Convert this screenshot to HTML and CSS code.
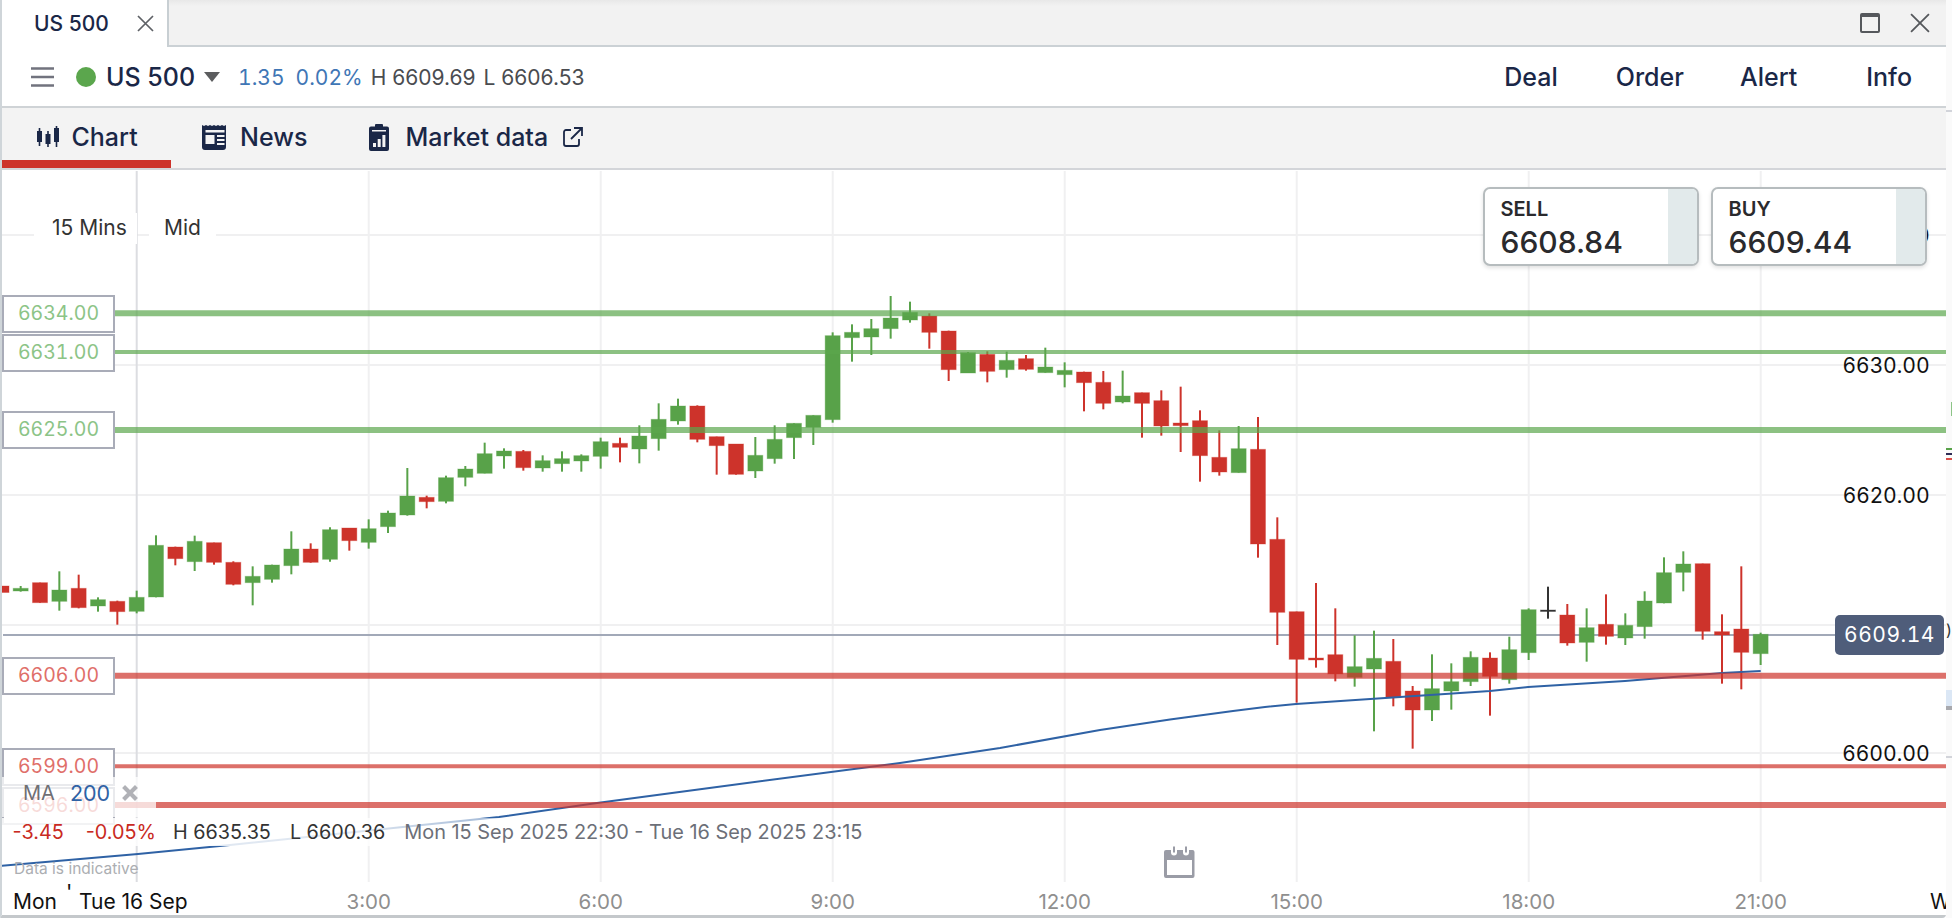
FILE: index.html
```html
<!DOCTYPE html>
<html lang="en">
<head>
<meta charset="utf-8">
<title>US 500</title>
<link rel="stylesheet" href="styles.css">
</head>
<body>
<div class="window">
  <header class="titlebar">
    <div class="tab">
      <span class="tab-name">US 500</span>
      <svg class="icon-x" viewBox="0 0 17 17"><path d="M1 1l15 15M16 1L1 16"/></svg>
    </div>
    <div class="win-controls">
      <svg class="icon-max" viewBox="0 0 20 20"><rect x="1" y="1" width="18" height="18" rx="1"/><path class="bar" d="M1 2.500h18"/></svg>
      <svg class="icon-close" viewBox="0 0 19 19"><path d="M1 1l17 17M18 1L1 18"/></svg>
    </div>
  </header>

  <div class="quotebar">
    <svg class="icon-menu" viewBox="0 0 23 20"><path d="M0 1.500h23M0 10h23M0 18.500h23"/></svg>
    <span class="dot"></span>
    <span class="instrument">US 500</span>
    <svg class="caret" viewBox="0 0 16 10"><path d="M0 0h16L8 10z"/></svg>
    <span class="chg chg-abs">1.35</span>
    <span class="chg chg-pct">0.02%</span>
    <span class="hl hl-h">H 6609.69</span>
    <span class="hl hl-l">L 6606.53</span>
    <nav class="actions">
      <a class="action action-deal">Deal</a>
      <a class="action action-order">Order</a>
      <a class="action action-alert">Alert</a>
      <a class="action action-info">Info</a>
    </nav>
  </div>

  <div class="tabsbar">
    <div class="nav-tab nav-chart is-active">
      <svg class="nav-icon icon-chart" viewBox="0 0 22 22"><path d="M0 5h5v11H0zM1.700 2h1.600v18H1.700zM8.500 8h5v10h-5zM10.200 5h1.600v16h-1.600zM17 2h5v14h-5zM18.700 0h1.600v21h-1.600z"/></svg>
      <span>Chart</span>
    </div>
    <div class="nav-tab nav-news">
      <svg class="nav-icon icon-news" viewBox="0 0 26 26"><path class="solid" d="M0 1l2 1 2-1 2 1 2-1 2 1 2-1 2 1 2-1 2 1 2-1 2 1 2-1v22a3 3 0 0 1-3 3H3a3 3 0 0 1-3-3z"/><path class="cut" d="M3.500 6h19v2.500h-19zM3.500 11h9v9h-9zM15 11h7.500v2H15zM15 15h7.500v2H15zM15 19h7.500v2H15z"/></svg>
      <span>News</span>
    </div>
    <div class="nav-tab nav-market">
      <svg class="nav-icon icon-market" viewBox="0 0 20 27"><path class="solid" d="M6 2.500V1a1 1 0 0 1 1-1h6a1 1 0 0 1 1 1v1.500h4a2 2 0 0 1 2 2V25a2 2 0 0 1-2 2H2a2 2 0 0 1-2-2V4.500a2 2 0 0 1 2-2z"/><path class="cut" d="M3 6h14v1.500H3zM4 19h3v4H4zM8.700 15h3v8h-3zM13.400 11h3v12h-3z"/></svg>
      <span>Market data</span>
      <svg class="icon-ext" viewBox="0 0 20 20"><path d="M8 3H3a2 2 0 0 0-2 2v12a2 2 0 0 0 2 2h11a2 2 0 0 0 2-2v-5M11 1h8v8M19 1L8 12"/></svg>
    </div>
  </div>

  <main class="chart">
    <svg class="plot" id="plot" viewBox="2 170 1944 745" width="1944" height="745">
      <g class="grid">
        <path d="M2 235H1946M2 365H1946M2 495H1946M2 625H1946M2 753H1946"/>
        <path d="M368.700 171V882M600.700 171V882M832.700 171V882M1064.700 171V882M1296.700 171V882M1528.700 171V882M1760.700 171V882"/>
      </g>
      <path class="grid-day" d="M136.700 171V882"/>
      <path class="last-price" d="M3 635H1840"/>
      <g class="y-axis">
        <text x="1930" y="243">6640.00</text>
        <text x="1930" y="373">6630.00</text>
        <text x="1930" y="503">6620.00</text>
        <text x="1930" y="761">6600.00</text>
      </g>
      <g id="candles"></g>
      <path class="ma" d="M0 866L138 854L230 845L499 817L597 803L717 787L900 763L1000 748L1100 730L1170 719.500L1233 711L1265 707L1296 704L1400 697L1490 691L1528 687L1625 681L1722 673L1760.700 671"/>
      <g class="levels-up">
        <path class="lv-thick" d="M114 313.300H1946M114 430H1946"/>
        <path class="lv-thin" d="M114 352H1946"/>
        <rect class="tag" x="3" y="296" width="111" height="36"/>
        <rect class="tag" x="3" y="335" width="111" height="36"/>
        <rect class="tag" x="3" y="412" width="111" height="36"/>
        <text class="tag-up" x="58.500" y="320">6634.00</text>
        <text class="tag-up" x="58.500" y="359">6631.00</text>
        <text class="tag-up" x="58.500" y="436">6625.00</text>
      </g>
      <g class="levels-down">
        <path class="lv-thick" d="M114 675.700H1946M114 805H1946"/>
        <path class="lv-thin" d="M114 766.300H1946"/>
        <rect class="tag" x="3" y="658" width="111" height="36"/>
        <rect class="tag" x="3" y="749" width="111" height="36"/>
        <rect class="tag" x="3" y="788" width="111" height="36"/>
        <text class="tag-down" x="58.500" y="682">6606.00</text>
        <text class="tag-down" x="58.500" y="773">6599.00</text>
        <text class="tag-down" x="58.500" y="812">6596.00</text>
      </g>
      <g class="x-axis">
        <text x="368.700" y="909">3:00</text>
        <text x="600.700" y="909">6:00</text>
        <text x="832.700" y="909">9:00</text>
        <text x="1064.700" y="909">12:00</text>
        <text x="1296.700" y="909">15:00</text>
        <text x="1528.700" y="909">18:00</text>
        <text x="1760.700" y="909">21:00</text>
      </g>
      <g class="x-major">
        <text x="13" y="909">Mon</text>
        <text x="66" y="900" class="tick-mark">'</text>
        <text x="79" y="909">Tue 16 Sep</text>
        <text x="1930" y="909">W</text>
      </g>
      <g class="calendar">
        <path d="M1166 850h5v2.500a3 3 0 0 0 6 0V850h6v2.500a3 3 0 0 0 6 0V850h3.500a2 2 0 0 1 2 2v24a2 2 0 0 1-2 2H1166a2 2 0 0 1-2-2v-24a2 2 0 0 1 2-2z"/>
        <path d="M1173 846.500h2v6h-2zM1185 846.500h2v6h-2z"/>
        <rect class="cal-page" x="1167" y="860" width="25" height="15"/>
      </g>
    </svg>

    <div class="period">
      <span class="period-item period-res">15 Mins</span>
      <span class="period-item period-mid">Mid</span>
    </div>

    <div class="deals">
      <div class="deal"><div class="deal-body"><span class="deal-side">SELL</span><span class="deal-price">6608.84</span></div><div class="deal-strip"></div></div>
      <div class="deal"><div class="deal-body"><span class="deal-side">BUY</span><span class="deal-price">6609.44</span></div><div class="deal-strip"></div></div>
    </div>

    <div class="last-tag">6609.14</div>

    <div class="ma-legend">
      <span class="ma-name">MA</span>
      <span class="ma-val">200</span>
      <svg class="ma-x" viewBox="0 0 14 14"><path d="M2 2l10 10M12 2L2 12"/></svg>
    </div>

    <div class="ohlc">
      <span class="o-down o-abs">-3.45</span>
      <span class="o-down o-pct">-0.05%</span>
      <span class="o-val o-h">H 6635.35</span>
      <span class="o-val o-l">L 6600.36</span>
      <span class="o-range">Mon 15 Sep 2025 22:30 - Tue 16 Sep 2025 23:15</span>
    </div>

    <div class="disclaimer">Data is indicative</div>
  </main>
</div>

<aside class="behind">
  <span class="b-line b-1"></span>
  <span class="b-green"></span>
  <span class="b-stack"></span>
  <span class="b-glyph">)</span>
  <span class="b-blue"></span>
  <span class="b-line b-2"></span>
</aside>
<script src="chart.js"></script>
</body>
</html>
```
FILE: styles.css
```css
* { box-sizing: border-box; }
html, body { margin: 0; height: 100%; }
body {
  width: 1952px;
  height: 918px;
  display: flex;
  overflow: hidden;
  background: #fff;
  font-family: Inter, "Liberation Sans", sans-serif;
  color: #1a2747;
}
.window {
  width: 1946px;
  height: 918px;
  display: flex;
  flex-direction: column;
  border-left: 2px solid #cfd5d9;
  border-bottom: 3px solid #c4c8cb;
  border-bottom-right-radius: 4px;
}

/* Title bar */
.titlebar {
  height: 47px;
  flex: none;
  display: flex;
  justify-content: space-between;
  background: linear-gradient(#e8e8e8 0, #f2f2f2 6px);
  border-bottom: 2px solid #cbd1d5;
}
.tab {
  width: 167px;
  height: 47px;
  display: flex;
  align-items: center;
  background: #fff;
  border-right: 2px solid #c8cfd3;
  padding-left: 32px;
  color: #1a2747;
}
.tab-name { font-size: 21px; font-weight: 500; width: 102.600px; }
.icon-x { width: 17px; height: 17px; fill: none; stroke: #5e6166; stroke-width: 1.700; }
.win-controls { display: flex; align-items: center; gap: 30px; padding-right: 16px; height: 45px; }
.icon-max { width: 20px; height: 20px; fill: none; stroke: #55585c; stroke-width: 2; }
.icon-max .bar { stroke-width: 3; }
.icon-close { width: 20px; height: 20px; fill: none; stroke: #55585c; stroke-width: 1.700; }

/* Quote bar */
.quotebar {
  height: 61px;
  flex: none;
  display: flex;
  align-items: center;
  background: #fff;
  border-bottom: 2px solid #cfd3d6;
  padding-left: 29px;
  padding-top: 1px;
}
.icon-menu { width: 23px; height: 20px; fill: none; stroke: #71737e; stroke-width: 2.400; flex: none; }
.dot { width: 20px; height: 20px; border-radius: 50%; background: #5ba64d; margin-left: 22px; flex: none; }
.instrument { font-size: 25px; font-weight: 500; margin-left: 10px; }
.caret { width: 16px; height: 10px; fill: #5c5d5f; margin-left: 9px; flex: none; }
.chg { font-size: 21px; color: #3f76b5; font-variant-numeric: tabular-nums; }
.chg-abs { margin-left: 18px; }
.chg-pct { margin-left: 11px; }
.hl { font-size: 21px; color: #4a4c50; }
.hl-h { margin-left: 8px; }
.hl-l { margin-left: 8px; }
.actions { margin-left: auto; display: flex; padding-right: 34px; }
.action { font-size: 25px; font-weight: 500; color: #1a2747; }
.action-order { margin-left: 58px; }
.action-alert { margin-left: 56px; }
.action-info { margin-left: 69px; }

/* Tabs */
.tabsbar {
  height: 62px;
  flex: none;
  display: flex;
  background: #f3f3f3;
  border-bottom: 2px solid #d3d5d9;
}
.nav-tab {
  display: flex;
  align-items: center;
  height: 52px;
  margin-top: 3px;
  font-size: 25px;
  font-weight: 500;
  color: #1a2747;
}
.nav-chart { width: 169px; padding-left: 34.500px; gap: 13px; position: relative; }
.nav-chart.is-active::after {
  content: "";
  position: absolute;
  left: 0;
  right: 0;
  bottom: -5px;
  height: 8px;
  background: #cd332b;
}
.nav-news { padding-left: 31px; gap: 12px; }
.nav-market { padding-left: 62px; gap: 16px; }
.icon-chart { width: 22px; height: 22px; }
.icon-news { width: 26px; height: 26px; }
.icon-market { width: 20px; height: 27px; }
.nav-icon { fill: #1a2747; flex: none; }
.nav-icon .cut { fill: #f3f3f3; }
.icon-ext { width: 20px; height: 20px; fill: none; stroke: #1a2747; stroke-width: 1.800; margin-left: -1px; flex: none; }

/* Chart */
.chart { flex: 1; position: relative; background: #fff; overflow: hidden; }
.plot { display: block; position: absolute; left: 0; top: 0; }
.grid path { fill: none; stroke: #f0f0f1; stroke-width: 2; }
.grid-day { fill: none; stroke: #dcdde1; stroke-width: 2; }
.last-price { fill: none; stroke: #a2a9b8; stroke-width: 2; }
.y-axis text { font-size: 21px; letter-spacing: .5px; fill: #111; text-anchor: end; }
.wick { stroke-width: 2; fill: none; }
.body { stroke-width: 1; stroke-opacity: .35; }
.up { fill: #58a249; stroke: #58a249; }
.down { fill: #cd332b; stroke: #cd332b; }
.flat { fill: #333; stroke: #333; }
.ma { fill: none; stroke: #2f62a5; stroke-width: 2; stroke-linejoin: round; }
.lv-thick, .lv-thin { fill: none; stroke-opacity: .7; }
.lv-thick { stroke-width: 6; }
.lv-thin { stroke-width: 4; }
.levels-up path { stroke: #5ba64d; }
.levels-down path { stroke: #cd332b; }
.tag { fill: #fff; stroke: #a9acb8; stroke-width: 2; }
.tag-up, .tag-down { font-size: 19.500px; text-anchor: middle; font-variant-numeric: tabular-nums; }
.tag-up { fill: #8cc487; }
.tag-down { fill: #df6f6a; }
.x-axis text { font-size: 20.500px; fill: #8f8f8f; text-anchor: middle; }
.x-major text { font-size: 21px; fill: #111; }
.tick-mark { font-size: 14px; }
.calendar path { fill: #9a9ca6; }
.cal-page { fill: #fff; }

.period {
  position: absolute;
  left: 32px;
  top: 43px;
  display: flex;
  font-size: 21px;
  color: #333;
}
.period-item { display: block; background: #fff; height: 31px; line-height: 30px; }
.period-res { width: 103px; padding-left: 18px; }
.period-mid { width: 67px; margin-left: 12px; padding-left: 15px; }

.deals { position: absolute; left: 1481px; top: 16.500px; display: flex; gap: 11.600px; }
.deal {
  width: 216.400px;
  height: 79.500px;
  display: flex;
  border: 2px solid #b6bcbe;
  border-radius: 7px;
  background: #fff;
  box-shadow: 0 2px 4px rgba(0, 0, 0, .12);
  overflow: hidden;
}
.deal-body {
  flex: 1;
  display: flex;
  flex-direction: column;
  padding: 8px 0 0 15.500px;
  color: #2a2a2d;
}
.deal-side { font-size: 20px; font-weight: 600; line-height: 24px; }
.deal-price { font-size: 30px; font-weight: 500; line-height: 38px; margin-top: 2px; }
.deal-strip { width: 29px; background: #e2eaeb; }

.last-tag {
  position: absolute;
  left: 1833px;
  top: 445px;
  width: 109px;
  height: 40px;
  border-radius: 5px;
  background: #4f5d7a;
  color: #fff;
  font-size: 21px;
  letter-spacing: .5px;
  font-variant-numeric: tabular-nums;
  line-height: 40px;
  text-align: center;
}

.ma-legend {
  position: absolute;
  left: 0;
  top: 607px;
  width: 154px;
  height: 40px;
  display: flex;
  align-items: flex-start;
  padding: 4px 0 0 21px;
  font-size: 20px;
  line-height: 24px;
  background: rgba(255, 255, 255, .75);
}
.ma-name { color: #6f6f74; }
.ma-val { color: #2f62a5; margin-left: 15px; font-size: 21.500px; }
.ma-x { width: 18px; height: 18px; fill: none; stroke: #b0b1b6; stroke-width: 3.200; margin: 3px 0 0 11px; }

.ohlc {
  position: absolute;
  left: 0;
  top: 648px;
  width: 498px;
  height: 28px;
  padding-left: 10.600px;
  display: flex;
  align-items: center;
  font-size: 19.800px;
  white-space: nowrap;
  background: linear-gradient(90deg, rgba(255, 255, 255, .85) 70%, rgba(255, 255, 255, .55));
}
.o-down { color: #c92a22; }
.o-val { color: #333; }
.o-range { color: #6c6f78; margin-left: 19px; font-size: 19.900px; }
.o-pct { margin-left: 22px; }
.o-h { margin-left: 17px; }
.o-l { margin-left: 19px; }

.disclaimer {
  position: absolute;
  left: 12px;
  top: 689px;
  font-size: 15.500px;
  line-height: 20px;
  color: #acaeb2;
}

/* Edge of the window behind */
.behind { width: 6px; height: 918px; position: relative; background: #fafafa; overflow: hidden; }
.b-line { position: absolute; left: 0; right: 0; height: 2px; background: #d2d4da; }
.b-1 { top: 110px; }
.b-2 { top: 756px; }
.b-green { position: absolute; left: 5px; top: 402px; width: 1px; height: 14px; background: #8cc487; }
.b-stack {
  position: absolute;
  left: 0;
  top: 448px;
  width: 6px;
  height: 14px;
  background: linear-gradient(#58a249 0 2px, transparent 2px 5px, #2f2c55 5px 7px, transparent 7px 10px, #d94d48 10px 12px, transparent 12px);
}
.b-glyph { position: absolute; left: 0; top: 620px; font-size: 16px; line-height: 20px; color: #333; }
.b-blue { position: absolute; left: 0; right: 0; top: 690px; height: 20px; background: linear-gradient(#dbe7f5 0 16px, #a8a9ae 16px); }
```
FILE: chart.js
```js
// Candles: [colour, wickTop, wickBottom, bodyTop, bodyBottom], in zoomed reference units
var SVG_NS = 'http://www.w3.org/2000/svg';
var layer = document.getElementById('candles');
var batches = [
  { first: -6, y0: 270, rows: [
    ['u',948,965,955,963],['d',938,998,938,998],['u',904,1022,960,994],['d',914,1015,955,1013],
    ['u',982,1025,989,1008],['d',992,1064,994,1025],['u',962,1030,982,1024],['u',796,982,826,981],
    ['d',830,886,831,866],['u',797,903,814,875],['d',818,884,818,877],['d',874,946,877,943],
    ['u',889,1006,919,938],['u',884,938,885,928],['u',784,913,837,887],['d',820,878,837,877],
    ['u',772,875,779,868],['d',774,842,774,812],['u',748,836,776,817],['u',722,789,729,770],
    ['u',594,737,678,735],['d',677,715,682,695],['u',617,700,623,694],['u',588,649,597,622],
    ['u',518,610,551,610]
  ]},
  { first: 19, y0: 280, rows: [
    ['u',505,566,513,528],['d',510,572,514,563],['u',526,575,542,564],['u',514,575,536,551],
    ['u',523,575,527,543],['u',473,566,485,529],['d',473,547,490,502],['u',436,550,468,507],
    ['u',370,512,418,476],['u',356,434,378,423],['d',376,487,378,478],['d',470,584,470,497],
    ['d',492,584,492,583],['u',471,594,526,573],['u',436,551,478,536],['u',430,537,430,473],
    ['u',406,495,406,442],['u',157,428,167,419],['u',133,245,157,173],['u',117,225,146,171],
    ['u',48,176,114,146],['u',65,128,97,120],['d',100,206,108,157],['d',152,303,153,269],
    ['u',216,279,218,279],['d',214,307,223,274]
  ]},
  { first: 45, y0: 340, rows: [
    ['u',35,113,61,89],['d',45,92,56,88],['u',23,98,81,98],['u',67,142,91,104],
    ['d',95,214,96,128],['d',93,208,127,190],['u',92,190,168,186],['d',158,293,158,190],
    ['d',151,287,182,258],['d',140,336,249,257],['d',211,425,242,347],['d',271,407,352,396],
    ['u',258,398,326,398],['d',231,653,328,612],['d',532,915,598,817],['d',815,1088,815,958],
    ['d',729,983,954,960],['d',805,1024,944,1002],['u',886,1040,980,1012],['u',872,1174,955,987],
    ['d',897,1099,964,1073]
  ]},
  { first: 66, y0: 520, rows: [
    ['d',498,686,513,570],['u',403,603,506,570],['u',430,569,485,513],['u',394,498,412,485],
    ['d',397,587,414,469],['u',350,491,389,479],['u',265,420,269,398],['f',200,296,270,274],
    ['d',252,377,285,369],['u',265,425,323,367],['d',223,374,313,349],['u',280,375,316,354],
    ['u',214,356,243,320],['u',112,250,158,249],['u',94,214,132,157],['d',131,359,131,334],
    ['d',283,491,335,345],['d',139,508,327,397],['u',338,435,343,401]
  ]}
];
var KIND = { u: 'up', d: 'down', f: 'flat' };

function el(name, attrs) {
  var node = document.createElementNS(SVG_NS, name);
  Object.keys(attrs).forEach(function (k) { node.setAttribute(k, attrs[k]); });
  layer.appendChild(node);
}

function candle(x, kind, wickTop, wickBottom, bodyTop, bodyBottom) {
  el('line', { 'class': 'wick ' + kind, x1: x, x2: x, y1: wickTop, y2: wickBottom });
  el('rect', { 'class': 'body ' + kind, x: x - 7.5, width: 15, y: bodyTop, height: Math.max(bodyBottom - bodyTop, 1.5) });
}

// Partial candle clipped by the left edge of the window
el('rect', { 'class': 'body down', x: 2, width: 7, y: 586, height: 6.5 });

batches.forEach(function (batch) {
  batch.rows.forEach(function (row, i) {
    var x = 136.67 + 19.333 * (batch.first + i);
    var y = function (v) { return batch.y0 + v / 3; };
    candle(x, KIND[row[0]], y(row[1]), y(row[2]), y(row[3]), y(row[4]));
  });
});
```
